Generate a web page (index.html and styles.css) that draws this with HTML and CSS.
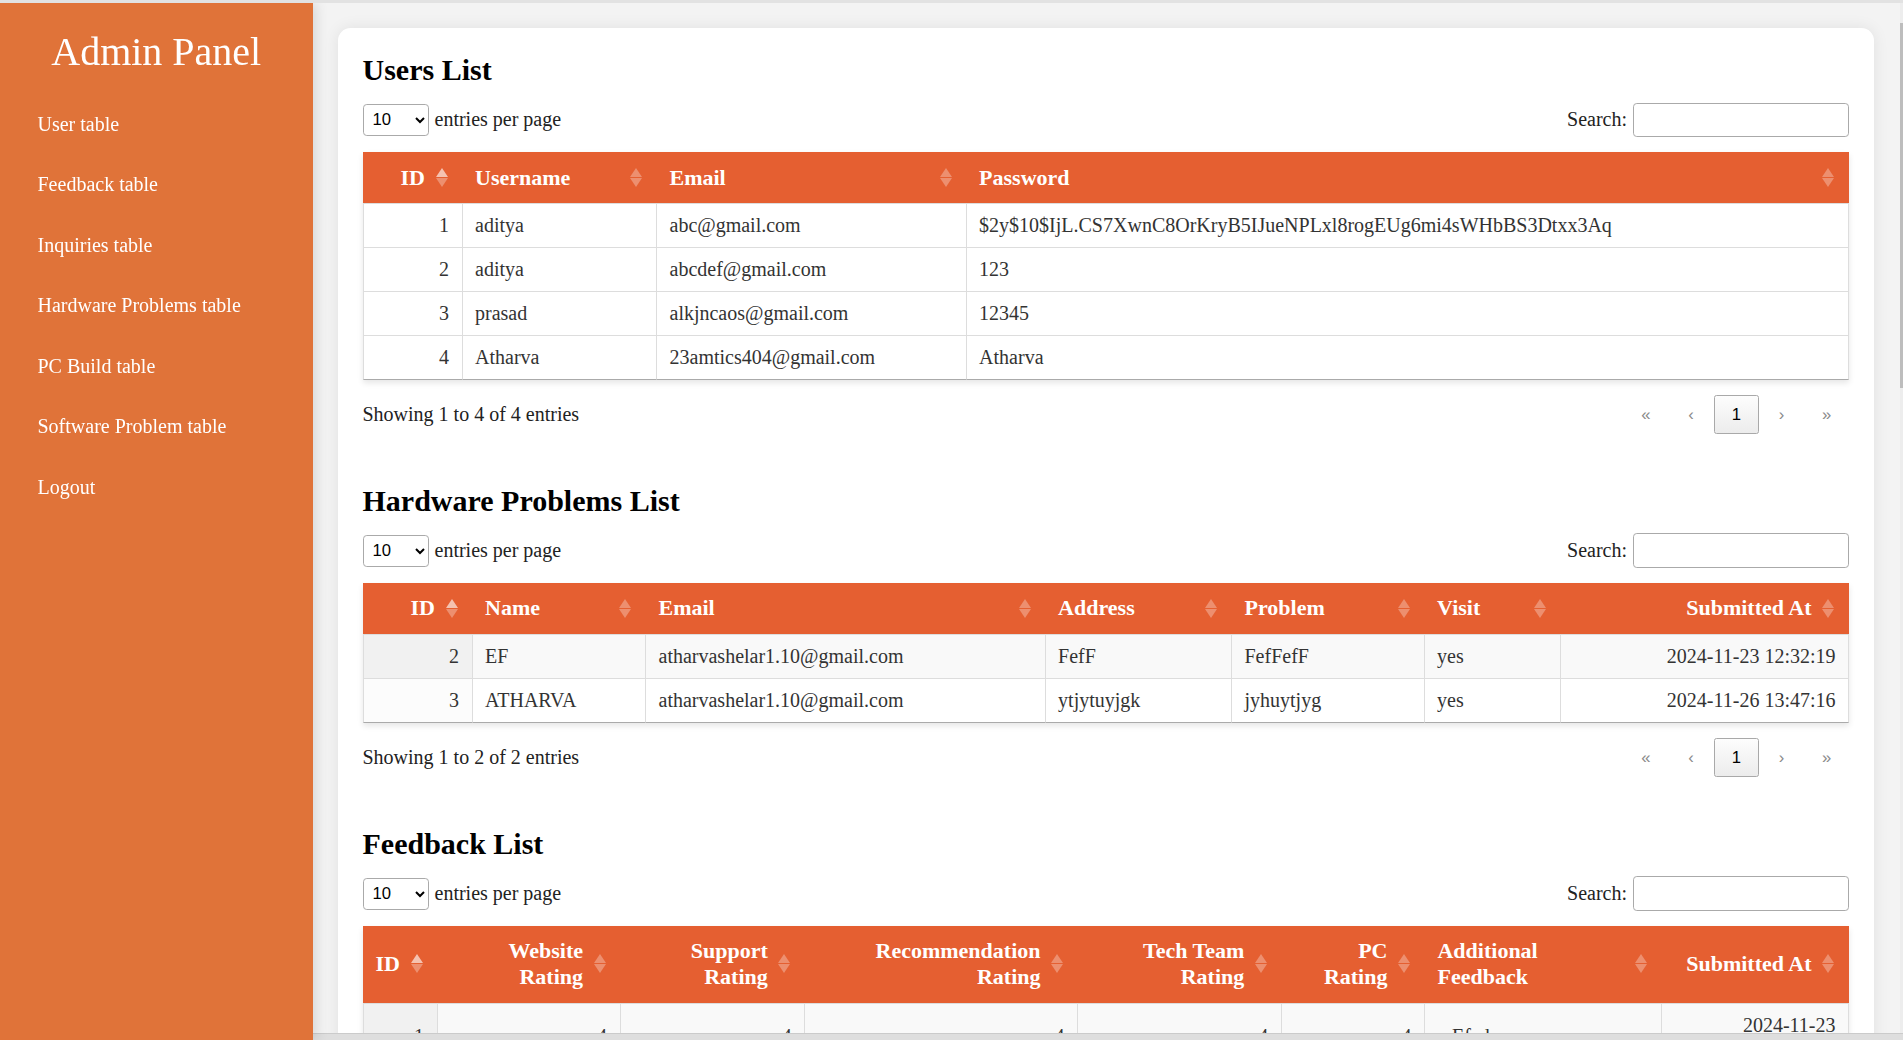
FILE: index.html
```html
<!DOCTYPE html>
<html lang="en">
<head>
<meta charset="utf-8">
<title>Admin Panel</title>
<link rel="stylesheet" href="styles.css">
</head>
<body>
<div class="app">
  <aside class="sidebar">
    <h1>Admin Panel</h1>
    <ul class="nav">
      <li><a href="#">User table</a></li>
      <li><a href="#">Feedback table</a></li>
      <li><a href="#">Inquiries table</a></li>
      <li><a href="#">Hardware Problems table</a></li>
      <li><a href="#">PC Build table</a></li>
      <li><a href="#">Software Problem table</a></li>
      <li><a href="#">Logout</a></li>
    </ul>
  </aside>
  <main class="main">
    <div class="card">

      <section class="section">
        <h2>Users List</h2>
        <div class="controls">
          <label class="length"><select><option>10</option><option>25</option><option>50</option></select> entries per page</label>
          <label class="search">Search: <input type="search"></label>
        </div>
        <table class="dt users">
          <thead>
            <tr>
              <th class="num w-uid">ID<span class="sort asc"></span></th>
              <th class="w-uname">Username<span class="sort"></span></th>
              <th class="w-uemail">Email<span class="sort"></span></th>
              <th>Password<span class="sort"></span></th>
            </tr>
          </thead>
          <tbody>
            <tr><td class="num">1</td><td>aditya</td><td>abc@gmail.com</td><td>$2y$10$IjL.CS7XwnC8OrKryB5IJueNPLxl8rogEUg6mi4sWHbBS3Dtxx3Aq</td></tr>
            <tr><td class="num">2</td><td>aditya</td><td>abcdef@gmail.com</td><td>123</td></tr>
            <tr><td class="num">3</td><td>prasad</td><td>alkjncaos@gmail.com</td><td>12345</td></tr>
            <tr><td class="num">4</td><td>Atharva</td><td>23amtics404@gmail.com</td><td>Atharva</td></tr>
          </tbody>
        </table>
        <div class="footer">
          <div class="info">Showing 1 to 4 of 4 entries</div>
          <nav class="paging">
            <button disabled>«</button><button disabled>‹</button><button class="current">1</button><button disabled>›</button><button disabled>»</button>
          </nav>
        </div>
      </section>

      <section class="section">
        <h2>Hardware Problems List</h2>
        <div class="controls">
          <label class="length"><select><option>10</option><option>25</option><option>50</option></select> entries per page</label>
          <label class="search">Search: <input type="search"></label>
        </div>
        <table class="dt striped hardware">
          <thead>
            <tr>
              <th class="num w-hid">ID<span class="sort asc"></span></th>
              <th class="w-hname">Name<span class="sort"></span></th>
              <th class="w-hemail">Email<span class="sort"></span></th>
              <th class="w-haddr">Address<span class="sort"></span></th>
              <th class="w-hprob">Problem<span class="sort"></span></th>
              <th class="w-hvisit">Visit<span class="sort"></span></th>
              <th class="num">Submitted At<span class="sort"></span></th>
            </tr>
          </thead>
          <tbody>
            <tr><td class="num sorted">2</td><td>EF</td><td>atharvashelar1.10@gmail.com</td><td>FefF</td><td>FefFefF</td><td>yes</td><td class="num">2024-11-23 12:32:19</td></tr>
            <tr><td class="num sorted">3</td><td>ATHARVA</td><td>atharvashelar1.10@gmail.com</td><td>ytjytuyjgk</td><td>jyhuytjyg</td><td>yes</td><td class="num">2024-11-26 13:47:16</td></tr>
          </tbody>
        </table>
        <div class="footer">
          <div class="info">Showing 1 to 2 of 2 entries</div>
          <nav class="paging">
            <button disabled>«</button><button disabled>‹</button><button class="current">1</button><button disabled>›</button><button disabled>»</button>
          </nav>
        </div>
      </section>

      <section class="section">
        <h2>Feedback List</h2>
        <div class="controls">
          <label class="length"><select><option>10</option><option>25</option><option>50</option></select> entries per page</label>
          <label class="search">Search: <input type="search"></label>
        </div>
        <table class="dt striped feedback">
          <thead>
            <tr>
              <th class="num w-fid">ID<span class="sort asc"></span></th>
              <th class="num w-fweb">Website Rating<span class="sort"></span></th>
              <th class="num w-fsup">Support Rating<span class="sort"></span></th>
              <th class="num w-frec">Recommendation Rating<span class="sort"></span></th>
              <th class="num w-ftech">Tech Team Rating<span class="sort"></span></th>
              <th class="num w-fpc">PC Rating<span class="sort"></span></th>
              <th class="w-fadd">Additional Feedback<span class="sort"></span></th>
              <th class="num">Submitted At<span class="sort"></span></th>
            </tr>
          </thead>
          <tbody>
            <tr><td class="num sorted">1</td><td class="num">4</td><td class="num">4</td><td class="num">4</td><td class="num">4</td><td class="num">4</td><td>wEfed</td><td class="num">2024-11-23 19:15:32</td></tr>
          </tbody>
        </table>
      </section>

    </div>
  </main>
</div>
<div class="vbar"><div class="thumb"></div></div>
<div class="hbar"></div>
</body>
</html>
```

FILE: styles.css
```css
html, body {
  margin: 0;
  height: 100%;
  overflow: hidden;
}

body {
  font-family: "Liberation Serif", "Times New Roman", serif;
  font-size: 20px;
  color: #222;
  background: #f3f3f3;
}

.app {
  display: flex;
  height: 1040px;
  box-sizing: border-box;
  border-top: 3px solid #e2e2e2;
  overflow: hidden;
}

/* Sidebar */
.sidebar {
  width: 312.5px;
  flex: none;
  box-sizing: border-box;
  padding: 26px 25px 25px;
  background: #e07339;
  color: #fff;
  box-shadow: 3px 0 12px rgba(0, 0, 0, 0.12);
  z-index: 1;
}

.sidebar h1 {
  margin: 0 0 19px;
  font-size: 40px;
  line-height: 46px;
  font-weight: normal;
  text-align: center;
}

.nav {
  list-style: none;
  margin: 0;
  padding: 0;
}

.nav li {
  padding: 18.75px 12.5px;
  line-height: 23px;
}

.nav a {
  color: #fff;
  text-decoration: none;
}

/* Main */
.main {
  flex: 1;
  min-width: 0;
  padding: 25px 29px 0 25px;
}

.card {
  background: #fff;
  border-radius: 12.5px;
  padding: 25px;
  box-shadow: 0 0 16px rgba(0, 0, 0, 0.08);
}

.section + .section {
  margin-top: 50px;
}

.section h2 {
  margin: 0;
  font-size: 30px;
  line-height: 34.5px;
  font-weight: bold;
  color: #000;
}

.controls {
  display: flex;
  justify-content: space-between;
  align-items: center;
  height: 34.5px;
  margin-top: 15px;
}

.length,
.search {
  display: flex;
  align-items: center;
  gap: 6px;
  line-height: 23px;
}

.length select {
  width: 66px;
  height: 32px;
  box-sizing: border-box;
  padding: 0 0 0 5px;
  font: 16.67px "Liberation Sans", Arial, sans-serif;
  color: #000;
  background: #fff;
  border: 1px solid #aaa;
  border-radius: 3.75px;
}

.search input {
  width: 216px;
  height: 34.5px;
  box-sizing: border-box;
  padding: 5px;
  font: 16.67px "Liberation Sans", Arial, sans-serif;
  background: #fff;
  border: 1px solid #aaa;
  border-radius: 3.75px;
}

/* Tables */
.dt {
  width: 100%;
  margin-top: 15px;
  border-collapse: separate;
  border-spacing: 0;
  table-layout: fixed;
  box-shadow: 0 3px 6px rgba(0, 0, 0, 0.1);
}

.dt th {
  position: relative;
  box-sizing: border-box;
  padding: 12.5px 37.5px 12.5px 12.5px;
  background: #e55f31;
  color: #fff;
  font-size: 22px;
  line-height: 25.3px;
  font-weight: bold;
  text-align: left;
  vertical-align: middle;
  border-bottom: 1px solid #e55f31;
}

.dt td {
  box-sizing: border-box;
  padding: 10px 12.5px;
  line-height: 23px;
  color: #333;
  background: #fff;
  border-top: 1px solid #ddd;
  border-right: 1px solid #ddd;
  vertical-align: middle;
}

.dt td:first-child {
  border-left: 1px solid #ddd;
}

.dt tbody tr:last-child td {
  border-bottom: 1px solid #aaa;
}

.dt .num {
  text-align: right;
}

.striped tbody tr:nth-child(odd) td {
  background: #f9f9f9;
}

.striped tbody tr:nth-child(odd) td.sorted {
  background: #f1f1f1;
}

.striped tbody tr:nth-child(even) td.sorted {
  background: #fcfcfc;
}

/* sort indicator */
.sort {
  position: absolute;
  right: 14px;
  top: 50%;
  width: 13px;
  height: 19px;
  margin-top: -9.5px;
}

.sort::before,
.sort::after {
  content: "";
  position: absolute;
  left: 0;
  width: 0;
  height: 0;
  border-left: 6.5px solid transparent;
  border-right: 6.5px solid transparent;
  opacity: 0.3;
}

.sort::before {
  top: 0;
  border-bottom: 9px solid #fff;
}

.sort::after {
  bottom: 0;
  border-top: 9px solid #fff;
}

.sort.asc::before {
  opacity: 0.62;
}

/* column widths */
.w-uid { width: 100px; }
.w-uname { width: 194.5px; }
.w-uemail { width: 309.6px; }

.w-hid { width: 110px; }
.w-hname { width: 173.5px; }
.w-hemail { width: 399.6px; }
.w-haddr { width: 186.4px; }
.w-hprob { width: 192.6px; }
.w-hvisit { width: 136.4px; }

.w-fid { width: 75px; }
.w-fweb { width: 183px; }
.w-fsup { width: 184.8px; }
.w-frec { width: 272.7px; }
.w-ftech { width: 203.8px; }
.w-fpc { width: 143.2px; }
.w-fadd { width: 236.7px; }

/* footer / paging */
.footer {
  display: flex;
  justify-content: space-between;
  align-items: center;
  margin-top: 15px;
}

.info {
  line-height: 23px;
}

.paging {
  display: flex;
}

.paging button {
  min-width: 25px;
  margin-left: 2.5px;
  padding: 8.33px 16.67px;
  font: 16.67px "Liberation Sans", Arial, sans-serif;
  color: #8a8a8a;
  background: transparent;
  border: 1px solid transparent;
  border-radius: 2.5px;
}

.paging button.current {
  color: #000;
  border-color: #a9a9a9;
  background: linear-gradient(to bottom, #fdfdfd 0%, #ececec 100%);
}

/* window scrollbars */
.vbar {
  position: fixed;
  top: 3px;
  right: 0;
  bottom: 7px;
  width: 3px;
  background: #ededed;
}

.vbar .thumb {
  margin-top: 20px;
  height: 365px;
  background: #bdbdbd;
}

.hbar {
  position: fixed;
  left: 0;
  right: 0;
  bottom: 0;
  height: 6px;
  background: #dedede;
  border-top: 1px solid #cbcbcb;
}
```
